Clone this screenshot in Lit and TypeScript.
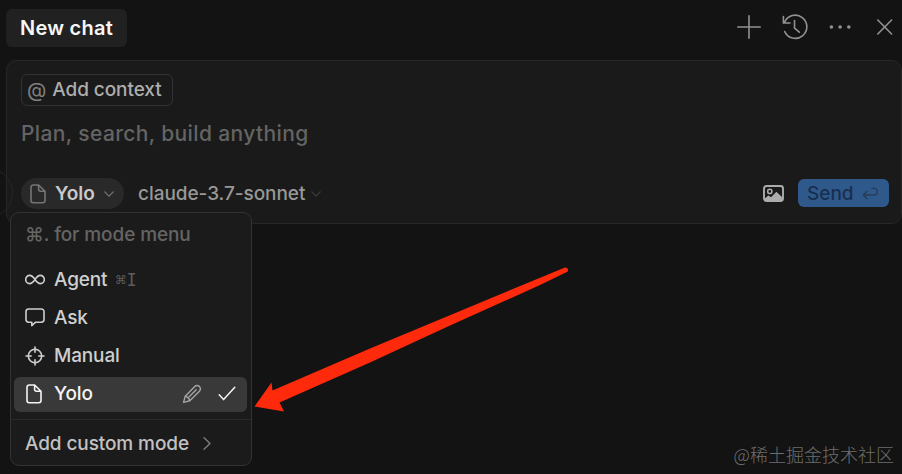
import { LitElement, html, css, svg, nothing } from "lit";
import { customElement, property } from "lit/decorators.js";

const shapes: Record<string, { w: number; h: number; body: unknown }> = {
  plus: { w: 24, h: 24, body: svg`<path d="M12 0.8V23.2M0.8 12H23.2" stroke-width="1.6"/>` },
  history: {
    w: 26, h: 26,
    body: svg`<path d="M2.6 8.1A11.6 11.6 0 1 1 2.7 17.6M1.4 2.6V9H8M12.5 6.6V14.2L17.3 18.2" stroke-width="1.6" stroke-linejoin="miter"/>`,
  },
  dots: {
    w: 24, h: 6,
    body: svg`<g fill="currentColor" stroke="none"><circle cx="2.4" cy="3" r="1.8"/><circle cx="11.1" cy="3" r="1.8"/><circle cx="19.8" cy="3" r="1.8"/></g>`,
  },
  close: { w: 16, h: 16, body: svg`<path d="M0.8 1L14.6 15M14.6 1L0.8 15" stroke-width="1.6"/>` },
  file: {
    w: 16, h: 20,
    body: svg`<path d="M3.2 1H8.6L15 7.2V16.6A2.2 2.2 0 0 1 12.8 18.8H3.2A2.2 2.2 0 0 1 1 16.6V3.2A2.2 2.2 0 0 1 3.2 1ZM8.6 1V5.4A1.8 1.8 0 0 0 10.4 7.2H15"/>`,
  },
  down: { w: 10, h: 6, body: svg`<path d="M0.8 0.9L5 5.1L9.2 0.9" stroke-width="1.3"/>` },
  right: { w: 8, h: 13, body: svg`<path d="M1 0.8L7 6.5L1 12.2" stroke-width="1.3"/>` },
  infinity: {
    w: 20, h: 11,
    body: svg`<path d="M10 5.5C8 2.6 6.7 1.4 4.7 1.4A4 4.1 0 0 0 4.7 9.6C6.7 9.6 8 8.4 10 5.5C12 2.6 13.3 1.4 15.3 1.4A4 4.1 0 0 1 15.3 9.6C13.3 9.6 12 8.4 10 5.5Z"/>`,
  },
  bubble: {
    w: 20, h: 19,
    body: svg`<path d="M3.6 1H16.4A2.6 2.6 0 0 1 19 3.6V11.6A2.6 2.6 0 0 1 16.4 14.2H10.6L6.8 17.6V14.2H3.6A2.6 2.6 0 0 1 1 11.6V3.6A2.6 2.6 0 0 1 3.6 1Z"/>`,
  },
  target: {
    w: 20, h: 20,
    body: svg`<circle cx="10" cy="10" r="6.7"/><path d="M10 1V6.2M10 13.8V19M1 10H6.2M13.8 10H19"/>`,
  },
  pencil: {
    w: 20, h: 20,
    body: svg`<path d="M1.6 18.4L3.2 12.2L12.8 2.4Q15 0.6 17.4 2.4Q19.4 4.8 17.4 7.2L7.8 16.8ZM3.2 12.2Q6.8 13 7.8 16.8M7.2 12.8L14.2 5.8" stroke-width="1.4"/>`,
  },
  check: { w: 18, h: 15, body: svg`<path d="M1.2 8.8L5.6 13.6L16.8 1.2" stroke-width="1.5"/>` },
  image: {
    w: 21, h: 17,
    body: svg`<rect x="1" y="1" width="19" height="15" rx="2.5" stroke-width="1.9"/><circle cx="6.8" cy="6.4" r="2.1" stroke-width="1.5"/><path d="M2 13.2L5.4 10.6L8 12.2L13.4 6.8L19 12V15H2Z" fill="currentColor" stroke="none"/>`,
  },
  enter: {
    w: 16, h: 13,
    body: svg`<path d="M10 1.4H12.4A2.6 2.6 0 0 1 15 4V5.4A2.6 2.6 0 0 1 12.4 8H1.4M5 4.2L1.2 8L5 11.8" stroke-width="1.3"/>`,
  },
};

@customElement("ui-icon")
class UiIcon extends LitElement {
  @property() name = "plus";

  static styles = css`
    :host { display: inline-flex; flex: none; }
    svg { display: block; fill: none; stroke: currentColor; stroke-width: 1.6; stroke-linecap: round; stroke-linejoin: round; }
  `;

  render() {
    const s = shapes[this.name];
    return html`<svg width=${s.w} height=${s.h} viewBox="0 0 ${s.w} ${s.h}">${s.body}</svg>`;
  }
}

const modes = [
  { icon: "infinity", label: "Agent", key: "⌘I", active: false },
  { icon: "bubble", label: "Ask", key: "", active: false },
  { icon: "target", label: "Manual", key: "", active: false },
  { icon: "file", label: "Yolo", key: "", active: true },
];

@customElement("mode-menu")
class ModeMenu extends LitElement {
  static styles = css`
    :host {
      display: block; box-sizing: border-box; width: 242px; height: 254px;
      padding: 1px 4px 2px 3px; border: 1px solid #323232; border-radius: 9px;
      background: #1b1b1b; color: #cfcfcf; font-size: 19px; font-weight: 500;
    }
    .hint { height: 40px; padding-left: 11px; display: flex; align-items: center; color: #656565; letter-spacing: -0.1px; margin-bottom: 9px; }
    .row { box-sizing: border-box; display: flex; align-items: center; height: 35px; margin-bottom: 3px; padding: 0 11px 2px; border-radius: 6px; letter-spacing: -0.15px; }
    .row.active { background: #393939; color: #f4f4f4; margin-bottom: 7px; }
    .icon { width: 19px; margin-right: 10px; display: flex; justify-content: center; }
    .row.active .icon { width: 18px; margin-right: 11px; }
    .key { margin-left: 8px; font: 17px "DejaVu Sans Mono", monospace; color: #5d5d5d; letter-spacing: 0.8px; }
    .tools { margin-left: auto; display: flex; align-items: center; gap: 16px; }
    .edit { color: #a5a5a5; display: flex; }
    .line { height: 1px; background: #2a2a2a; margin: 0 -4px 0 -3px; }
    .add { display: flex; align-items: center; gap: 14px; height: 47px; padding-left: 11px; color: #c2c2c2; letter-spacing: -0.1px; }
    .arrow { color: #808080; display: flex; }
  `;

  render() {
    return html`
      <div class="hint">⌘. for mode menu</div>
      ${modes.map(
        (m) => html`<div class="row ${m.active ? "active" : ""}">
          <span class="icon"><ui-icon name=${m.icon}></ui-icon></span>
          <span>${m.label}</span>
          ${m.key ? html`<span class="key">${m.key}</span>` : nothing}
          ${m.active
            ? html`<span class="tools"><span class="edit"><ui-icon name="pencil"></ui-icon></span><ui-icon name="check"></ui-icon></span>`
            : nothing}
        </div>`,
      )}
      <div class="line"></div>
      <div class="add"><span>Add custom mode</span><span class="arrow"><ui-icon name="right"></ui-icon></span></div>
    `;
  }
}

@customElement("app-root")
class AppRoot extends LitElement {
  static styles = css`
    :host {
      display: block; position: relative; width: 902px; height: 474px; overflow: hidden;
      background: #131313; font-family: Inter, "Liberation Sans", sans-serif; font-size: 20px;
      font-weight: 500; white-space: nowrap;
    }
    .header { height: 60px; box-sizing: border-box; padding: 9px 9px 13px 6px; display: flex; justify-content: space-between; align-items: flex-start; }
    .tab { box-sizing: border-box; width: 121px; height: 38px; padding-left: 14px; border-radius: 6px; background: #212121; color: #f6f6f6; display: flex; align-items: center; font-weight: 600; letter-spacing: 0.25px; }
    .actions { height: 36px; display: flex; align-items: center; color: #929292; }
    .history { margin-left: 21px; display: flex; }
    .more { margin-left: 21px; display: flex; }
    .shut { margin-left: 24px; display: flex; }
    .panel { box-sizing: border-box; height: 164px; margin-left: 6px; padding: 13px 12px 14px 14px; border: 1px solid #272727; border-radius: 10px; background: #1a1a1a; display: flex; flex-direction: column; align-items: flex-start; }
    .context { box-sizing: border-box; width: 152px; height: 32px; border: 1px solid #323232; border-radius: 6px; display: flex; align-items: center; padding: 0 0 1px 5px; gap: 6px; font-size: 19px; letter-spacing: -0.08px; color: #adadad; }
    .at { color: #808080; font-size: 20px; font-weight: 400; }
    .prompt { margin-top: 13px; height: 30px; line-height: 30px; font-size: 21px; letter-spacing: 0.37px; color: #646464; }
    .bar { margin-top: auto; align-self: stretch; display: flex; align-items: center; height: 31px; }
    .mode { box-sizing: border-box; width: 103px; height: 31px; border-radius: 16px; background: #292929; display: flex; align-items: center; padding-left: 9px; color: #757575; }
    .mode-name { margin: 0 9px 0 9px; color: #c9c9c9; font-weight: 600; font-size: 19px; }
    .model { margin: 0 6px 0 14px; color: #989898; font-size: 19px; letter-spacing: -0.05px; }
    .model-arrow { color: #3c3c3c; display: flex; }
    .image { margin-left: auto; color: #acacac; display: flex; }
    .send { box-sizing: border-box; width: 91px; height: 28px; margin: 0 0 1px 14px; padding-left: 9px; border-radius: 6px; background: #30598b; color: #172f50; display: flex; align-items: center; gap: 8px; font-size: 19px; }
    .send-key { color: #263c58; display: flex; }
    .edge { position: absolute; left: -37px; top: 168px; width: 48px; height: 48px; border: 1px solid #262626; border-radius: 50%; }
    .menu { position: absolute; left: 10px; top: 212px; }
    .pointer { position: absolute; left: 250px; top: 262px; }
    .mark { position: absolute; right: 8px; bottom: 6px; font: 300 18px/28px "Noto Sans CJK SC", sans-serif; color: #6e6e6e; }
  `;

  render() {
    return html`
      <div class="header">
        <div class="tab">New chat</div>
        <div class="actions">
          <ui-icon name="plus"></ui-icon>
          <span class="history"><ui-icon name="history"></ui-icon></span>
          <span class="more"><ui-icon name="dots"></ui-icon></span>
          <span class="shut"><ui-icon name="close"></ui-icon></span>
        </div>
      </div>
      <div class="panel">
        <div class="context"><span class="at">@</span><span>Add context</span></div>
        <div class="prompt">Plan, search, build anything</div>
        <div class="bar">
          <div class="mode"><ui-icon name="file"></ui-icon><span class="mode-name">Yolo</span><ui-icon name="down"></ui-icon></div>
          <span class="model">claude-3.7-sonnet</span>
          <span class="model-arrow"><ui-icon name="down"></ui-icon></span>
          <span class="image"><ui-icon name="image"></ui-icon></span>
          <div class="send"><span>Send</span><span class="send-key"><ui-icon name="enter"></ui-icon></span></div>
        </div>
      </div>
      <div class="edge"></div>
      <mode-menu class="menu"></mode-menu>
      <svg class="pointer" width="322" height="158" viewBox="250 262 322 158">
        <path fill="#ff2a0c" d="M254.5 406.5L271.5 382.5L272.5 390.5L370 348.5L565 267.4Q568.8 267.4 567.8 271.5L540 285L450 325.5L370 362.5L279.5 402.5L284 411.5Z"/>
      </svg>
      <div class="mark">@稀土掘金技术社区</div>
    `;
  }
}
